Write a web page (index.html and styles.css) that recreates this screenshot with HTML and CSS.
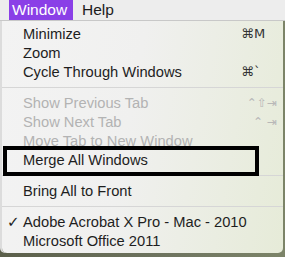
FILE: index.html
```html
<!DOCTYPE html>
<html>
<head>
<meta charset="utf-8">
<link rel="stylesheet" href="styles.css">
</head>
<body>
<div class="menubar">
  <span class="mb-item active">Window</span>
  <span class="mb-item">Help</span>
</div>
<div class="panel">
  <div class="row"><span class="label">Minimize</span><span class="key">⌘M</span></div>
  <div class="row"><span class="label">Zoom</span></div>
  <div class="row"><span class="label">Cycle Through Windows</span><span class="key">⌘`</span></div>
  <div class="sep"></div>
  <div class="row dis"><span class="label">Show Previous Tab</span><span class="key small">⌃⇧⇥</span></div>
  <div class="row dis"><span class="label">Show Next Tab</span><span class="key small">⌃ ⇥</span></div>
  <div class="row dis"><span class="label">Move Tab to New Window</span></div>
  <div class="row boxed"><span class="label">Merge All Windows</span></div>
  <div class="sep"></div>
  <div class="row"><span class="label">Bring All to Front</span></div>
  <div class="sep"></div>
  <div class="row"><span class="check">✓</span><span class="label">Adobe Acrobat X Pro - Mac - 2010</span></div>
  <div class="row"><span class="label">Microsoft Office 2011</span></div>
</div>
</body>
</html>
```
FILE: styles.css
```css
html, body {
  margin: 0;
  padding: 0;
}
body {
  width: 285px;
  height: 257px;
  overflow: hidden;
  background: linear-gradient(90deg, #5b5f4a, #6f7560 60%, #7c8468);
  font-family: "Liberation Sans", Arial, sans-serif;
  font-size: 14.7px;
  color: #1e1e1e;
}
.menubar {
  height: 21px;
  background: #ededed;
  display: flex;
  align-items: stretch;
  padding-left: 9px;
  box-sizing: border-box;
  border-bottom: 1px solid #c8c8c8;
}
.mb-item {
  display: flex;
  align-items: center;
  padding: 0 9px 0 4px;
  font-size: 15.5px;
  color: #1c1c1c;
}
.mb-item.active {
  background: #8a3fe7;
  color: #fff;
  padding: 0 4px 0 3px;
  margin-right: 5px;
  width: 57px;
}
.panel {
  margin-left: 2px;
  width: 281px;
  padding: 3px 0 3px;
  background: linear-gradient(100deg, #f3f3f3 0%, #f0f0ef 45%, #e6ebd8 100%);
  border-radius: 0 0 5px 5px;
  box-shadow: -2px 0 0 #dcdcdc;
}
.row {
  position: relative;
  height: 19px;
  display: flex;
  align-items: center;
  padding-left: 21px;
  padding-right: 6px;
}
.label {
  flex: 1;
  white-space: nowrap;
}
.key {
  width: 36px;
  font-family: "DejaVu Sans", sans-serif;
  font-size: 13px;
  color: #333;
}
.key.small {
  font-size: 12px;
  color: #b8b8b8;
  text-align: right;
  padding-right: 0;
  white-space: pre;
}
.dis {
  color: #b3b3b3;
}
.sep {
  height: 1px;
  background: #d6d6d6;
  margin: 6px 0 5px;
}
.check {
  position: absolute;
  left: 5px;
  font-family: "DejaVu Sans", sans-serif;
  font-size: 15px;
  font-weight: bold;
}
.boxed::after {
  content: "";
  position: absolute;
  left: 1px;
  top: -4px;
  width: 248px;
  height: 22px;
  border: 4px solid #000;
}
```
